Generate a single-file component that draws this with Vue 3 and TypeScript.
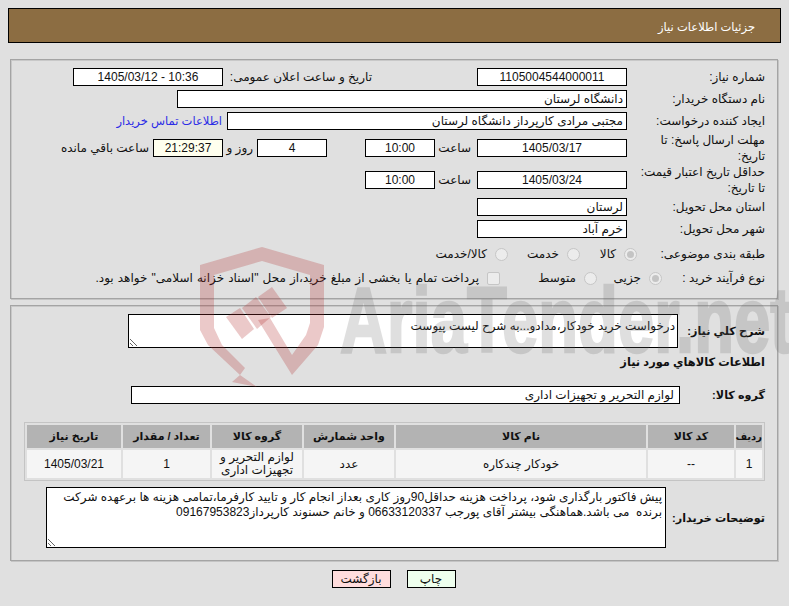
<script setup lang="ts">
interface Col { title: string; width: number; value: string }
const cols: Col[] = [
  { title: 'ردیف', width: 26, value: '1' },
  { title: 'کد کالا', width: 86, value: '--' },
  { title: 'نام کالا', width: 250, value: 'خودکار چندکاره' },
  { title: 'واحد شمارش', width: 90, value: 'عدد' },
  { title: 'گروه کالا', width: 90, value: 'لوازم التحریر و تجهیزات اداری' },
  { title: 'تعداد / مقدار', width: 87, value: '1' },
  { title: 'تاریخ نیاز', width: 94, value: '1405/03/21' }
]
const summary = 'درخواست خرید خودکار،مدادو...به شرح لیست پیوست'
const notes = 'پیش فاکتور بارگذاری شود، پرداخت هزینه حداقل90روز کاری بعداز انجام کار و تایید کارفرما،تمامی هزینه ها برعهده شرکت\nبرنده  می باشد.هماهنگی بیشتر آقای پورجب 06633120337 و خانم حسنوند کارپرداز09167953823'
</script>

<template>
  <div class="page" dir="rtl">
    <header class="title">جزئیات اطلاعات نیاز</header>

    <section class="panel first">
      <div class="row">
        <label class="lbl">شماره نیاز:</label>
        <div class="box date center">1105004544000011</div>
        <label class="announce">تاریخ و ساعت اعلان عمومی:</label>
        <div class="box date center">10:36 - 1405/03/12</div>
      </div>
      <div class="row">
        <label class="lbl">نام دستگاه خریدار:</label>
        <div class="box buyer">دانشگاه لرستان</div>
      </div>
      <div class="row">
        <label class="lbl">ایجاد کننده درخواست:</label>
        <div class="box creator">مجتبی مرادی کارپرداز دانشگاه لرستان</div>
        <a class="contact">اطلاعات تماس خریدار</a>
      </div>
      <div class="row tall">
        <label class="lbl">مهلت ارسال پاسخ: تا تاریخ:</label>
        <div class="box date center">1405/03/17</div>
        <span class="hour-lbl">ساعت</span>
        <div class="box small center">10:00</div>
        <div class="box small center days">4</div>
        <span class="days-lbl">روز و</span>
        <div class="box small center clock">21:29:37</div>
        <span class="remain">ساعت باقي مانده</span>
      </div>
      <div class="row tall">
        <label class="lbl">حداقل تاریخ اعتبار قیمت: تا تاریخ:</label>
        <div class="box date center">1405/03/24</div>
        <span class="hour-lbl">ساعت</span>
        <div class="box small center">10:00</div>
      </div>
      <div class="row">
        <label class="lbl">استان محل تحویل:</label>
        <div class="box date">لرستان</div>
      </div>
      <div class="row">
        <label class="lbl">شهر محل تحویل:</label>
        <div class="box date">خرم آباد</div>
      </div>
      <div class="row choice topic">
        <label class="lbl lbl-topic">طبقه بندی موضوعی:</label>
        <span class="opt w57"><input type="radio" name="topic" checked disabled />کالا</span>
        <span class="opt w72"><input type="radio" name="topic" disabled />خدمت</span>
        <span class="opt"><input type="radio" name="topic" disabled />کالا/خدمت</span>
      </div>
      <div class="row choice">
        <label class="lbl lbl-type">نوع فرآیند خرید :</label>
        <span class="opt w65"><input type="radio" name="kind" checked disabled />جزیی</span>
        <span class="opt w97"><input type="radio" name="kind" disabled />متوسط</span>
        <span class="opt wide"><input type="checkbox" disabled />پرداخت تمام یا بخشی از مبلغ خرید،از محل "اسناد خزانه اسلامی" خواهد بود.</span>
      </div>
    </section>

    <section class="panel second">
      <div class="row summary-row">
        <label class="lbl strong w87">شرح کلي نیاز:</label>
        <textarea class="area summary" readonly :value="summary"></textarea>
      </div>
      <h2 class="heading">اطلاعات کالاهاي مورد نیاز</h2>
      <div class="row group-row">
        <label class="lbl strong w85">گروه کالا:</label>
        <div class="box group">لوازم التحریر و تجهیزات اداری</div>
      </div>
      <table class="items">
        <colgroup>
          <col v-for="c in cols" :key="c.title" :style="{ width: c.width + 'px' }" />
        </colgroup>
        <thead>
          <tr><th v-for="c in cols" :key="c.title">{{ c.title }}</th></tr>
        </thead>
        <tbody>
          <tr><td v-for="c in cols" :key="c.title">{{ c.value }}</td></tr>
        </tbody>
      </table>
      <div class="row notes-row">
        <label class="lbl strong w99">توضیحات خریدار:</label>
        <textarea class="area notes" readonly :value="notes"></textarea>
      </div>
    </section>

    <footer class="actions">
      <button class="btn print" type="button">چاپ</button>
      <button class="btn back" type="button">بازگشت</button>
    </footer>

    <div class="wm-layer" aria-hidden="true">
      <div class="wm-shape wm-band"></div>
      <div class="wm-shape wm-a"></div>
      <div class="wm-shape wm-b"></div>
      <div class="wm-shape wm-c"></div>
      <svg class="watermark" viewBox="0 0 789 606" width="789" height="606">
        <text class="wm-text" x="340" y="352" textLength="452" lengthAdjust="spacingAndGlyphs">AriaTender.net</text>
      </svg>
    </div>
  </div>
</template>

<style>
html, body { margin: 0; background: #e0e0e0; }
</style>

<style scoped>
.page {
  position: relative;
  width: 789px;
  height: 606px;
  box-sizing: border-box;
  padding: 8px 8px 0;
  overflow: hidden;
  background: #e0e0e0;
  color: #111;
  font: 12px "Liberation Sans", "DejaVu Sans", sans-serif;
}
.title {
  height: 35px;
  box-sizing: border-box;
  border: 1px solid #000;
  background: #8c6d42;
  color: #fff;
  font-size: 11.5px;
  line-height: 36px;
  padding-right: 25px;
}
.panel {
  margin: 0 3px 0 2px;
  box-sizing: border-box;
  border: 1px solid #a4a4a4;
  box-shadow: 1px 1px 0 #c4c4c4, inset 1px 1px 0 #c8c8c8;
  padding-right: 12px;
}
.first { height: 240px; margin-top: 16px; padding-top: 8px; display: flex; flex-direction: column; gap: 4px; }
.second { height: 256px; margin-top: 6px; padding-top: 8px; }
.row { display: flex; align-items: center; min-height: 18px; }
.tall { height: 28px; }
.choice { height: 20px; }
.topic { margin-top: 2px; }
.lbl { width: 138px; flex: none; box-sizing: border-box; padding-left: 10px; line-height: 16px; }
.lbl-topic { width: 128px; padding-left: 0; }
.lbl-type { width: 103px; padding-left: 0; }
.strong { font-size: 11.2px; font-weight: bold; padding-left: 0; white-space: nowrap; }
.w87 { width: 87px; }
.w85 { width: 85px; }
.w99 { width: 99px; }
.box {
  height: 18px;
  box-sizing: border-box;
  flex: none;
  border: 1px solid #000;
  background: #fff;
  line-height: 16px;
  padding: 0 3px;
  white-space: nowrap;
}
.center { text-align: center; }
.date { width: 150px; }
.announce { width: 254px; flex: none; box-sizing: border-box; padding-right: 105px; white-space: nowrap; }
.buyer { width: 450px; }
.creator { width: 400px; }
.contact { margin-right: 5px; color: #2c2ce6; font-size: 11.5px; white-space: nowrap; }
.small { width: 70px; }
.hour-lbl { width: 42px; padding-right: 6px; box-sizing: border-box; flex: none; }
.days { margin-right: 38px; }
.days-lbl { width: 34px; padding-right: 4px; box-sizing: border-box; flex: none; white-space: nowrap; }
.remain { margin-right: 4px; white-space: nowrap; }
.clock { background: #ffffee; }
.opt { display: flex; align-items: center; flex: none; white-space: nowrap; }
.wide { word-spacing: .8px; }
.w57 { width: 57px; }
.w72 { width: 72px; }
.w65 { width: 65px; }
.w97 { width: 97px; }
.opt input {
  appearance: none;
  box-sizing: border-box;
  width: 13px;
  height: 13px;
  margin: 0 0 0 8px;
  flex: none;
  border: 1px solid #c6c6c6;
  border-radius: 50%;
  background: #ececec;
  position: relative;
}
.opt input[type="checkbox"] { border-radius: 2px; }
.opt input:checked::after {
  content: "";
  position: absolute;
  inset: 2px;
  border-radius: 50%;
  background: #c4c4c4;
}
.area {
  display: block;
  box-sizing: border-box;
  flex: none;
  margin: 0;
  padding: 2px 3px;
  border: 1px solid #000;
  border-radius: 0;
  background: #fff;
  color: #111;
  font: inherit;
  line-height: 15px;
  outline: none;
  direction: rtl;
}
.summary { width: 550px; height: 34px; padding: 4px 2px 0; }
.summary-row { height: 34px; }
.heading {
  margin: 6px 0 0;
  font-size: 11.4px;
  font-weight: bold;
  line-height: 16px;
}
.group-row { margin-top: 16px; }
.group { width: 549px; padding-right: 5px; }
.items {
  margin: 18px 0 0 0;
  width: 741px;
  box-sizing: border-box;
  table-layout: fixed;
  border: 1px solid #c4c4c4;
  border-collapse: separate;
  border-spacing: 2px;
}
.items th {
  height: 23px;
  padding: 0;
  background: #b3b3b3;
  font-size: 11px;
  font-weight: bold;
  text-align: center;
}
.items th:first-child { font-size: 10px; }
.items td {
  height: 28px;
  padding: 0 2px;
  background: #f5f5f5;
  text-align: center;
  line-height: 13px;
}
.notes-row { margin-top: 6px; }
.notes { width: 620px; height: 61px; }
.actions {
  display: flex;
  justify-content: center;
  gap: 16px;
  margin-top: 9px;
  padding-right: 2px;
  box-sizing: border-box;
}
.btn {
  height: 18px;
  box-sizing: border-box;
  padding: 0;
  border: 1px solid #000;
  color: #111;
  font: inherit;
  line-height: 15px;
}
.print { width: 49px; background: #eeffee; }
.back { width: 59px; background: #ffdddd; }
.wm-layer {
  position: absolute;
  top: 0;
  left: 0;
  width: 789px;
  height: 606px;
  direction: ltr;
  pointer-events: none;
}
.wm-shape {
  position: absolute;
  inset: 0;
  background: rgba(176, 48, 48, .26);
}
.wm-band {
  clip-path: polygon(200px 265px, 262px 247px, 324px 265px, 324px 327px, 318px 345px, 292px 375px, 258px 320px, 270px 318px, 292px 355px, 306px 335px, 310px 323px, 310px 275px, 262px 261px, 214px 275px, 214px 328px, 222px 345px, 245px 368px, 240px 375px, 257px 387px, 232px 382px, 240px 375px, 208px 345px, 200px 330px);
}
.wm-a { clip-path: polygon(226px 317px, 240px 308px, 254px 329px, 242px 339px); }
.wm-b { clip-path: polygon(242px 308px, 256px 297px, 271px 317px, 257px 329px); }
.wm-c { clip-path: polygon(258px 297px, 272px 287px, 287px 308px, 272px 318px); }
.watermark { position: absolute; top: 0; left: 0; display: block; }
.wm-text {
  font: bold 92px "Liberation Sans", sans-serif;
  fill: #646464;
  stroke: #646464;
  stroke-width: 2.5px;
  opacity: .2;
}
</style>
